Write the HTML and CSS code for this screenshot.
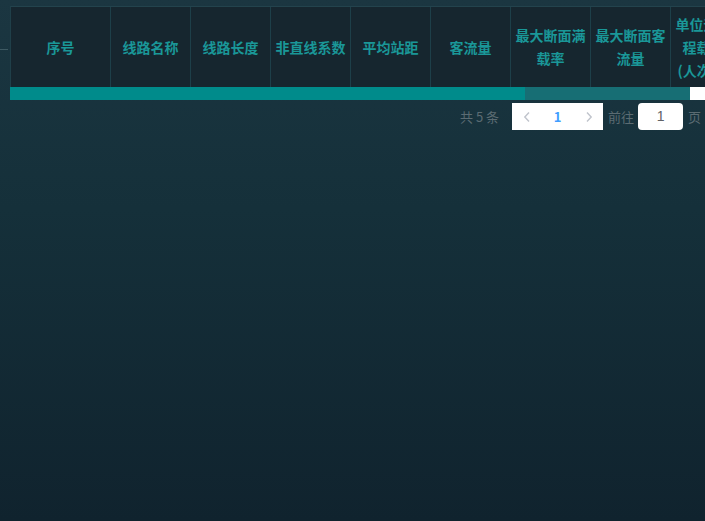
FILE: index.html
```html
<!DOCTYPE html>
<html lang="zh">
<head>
<meta charset="utf-8">
<title>线路统计</title>
<link rel="stylesheet" href="styles.css">
</head>
<body>
<div class="page">
  <span class="edge-mark"></span>
  <div class="table">
    <div class="thead">
      <div class="th w100"><span>序号</span></div>
      <div class="th"><span>线路名称</span></div>
      <div class="th"><span>线路长度</span></div>
      <div class="th"><span>非直线系数</span></div>
      <div class="th"><span>平均站距</span></div>
      <div class="th"><span>客流量</span></div>
      <div class="th"><span>最大断面满载率</span></div>
      <div class="th"><span>最大断面客流量</span></div>
      <div class="th"><span>单位运营里程载客量(人次/km)</span></div>
    </div>
    <div class="scrollbar">
      <div class="track"><div class="thumb"></div></div>
      <div class="corner"></div>
    </div>
  </div>
  <div class="pagination">
    <span class="total">共 5 条</span>
    <div class="pager">
      <span class="btn prev">
        <svg width="8" height="12" viewBox="0 0 8 12"><path d="M6 1.5 1.8 6 6 10.5" fill="none" stroke="#c0c4cc" stroke-width="1.4"/></svg>
      </span>
      <span class="num">1</span>
      <span class="btn next">
        <svg width="8" height="12" viewBox="0 0 8 12"><path d="M2 1.5 6.2 6 2 10.5" fill="none" stroke="#c0c4cc" stroke-width="1.4"/></svg>
      </span>
    </div>
    <span class="goto">前往</span>
    <span class="jump">1</span>
    <span class="goto">页</span>
  </div>
</div>
</body>
</html>
```

FILE: styles.css
```css
html, body {
  margin: 0;
  height: 100%;
}
body {
  background: linear-gradient(180deg, #1b3641 0%, #15303a 40%, #10232e 100%);
  font-family: "Noto Sans CJK SC", "Noto Sans", sans-serif;
  overflow: hidden;
}
.page {
  position: relative;
  padding: 6px 0 0 10px;
  width: 695px;
  height: 515px;
  overflow: hidden;
}
.edge-mark {
  position: absolute;
  left: 0;
  top: 49px;
  width: 8px;
  height: 1px;
  background: #3e5a63;
}
.table {
  width: 720px;
  border-top: 1px solid #23434d;
  border-left: 1px solid #1f3f49;
}
.thead {
  display: grid;
  grid-template-columns: 100px repeat(8, 80px);
  height: 80px;
  background: #16262f;
}
.th {
  display: flex;
  align-items: center;
  justify-content: center;
  border-right: 1px solid #1d3f49;
  padding: 0 4px;
  text-align: center;
  color: #1a9798;
  font-size: 14px;
  font-weight: bold;
  line-height: 23px;
}
.th span {
  display: block;
  width: 71px;
}
.th.w100 span {
  width: auto;
}
.scrollbar {
  display: flex;
  height: 13px;
  margin-left: -1px;
}
.track {
  width: 680px;
  background: #176e74;
}
.thumb {
  width: 515px;
  height: 100%;
  background: #008b8b;
}
.corner {
  width: 15px;
  background: #ffffff;
}
.pagination {
  display: flex;
  align-items: center;
  margin-top: 3px;
  margin-left: 450px;
  height: 27px;
  font-size: 13px;
  white-space: nowrap;
}
.total {
  color: #5b6b72;
  margin-right: 13px;
}
.pager {
  display: flex;
  align-items: center;
  background: #ffffff;
  width: 91px;
  height: 27px;
}
.btn {
  width: 29px;
  display: flex;
  justify-content: center;
  align-items: center;
}
.num {
  width: 33px;
  text-align: center;
  color: #409eff;
  font-weight: bold;
}
.goto {
  color: #5b6b72;
  margin: 0 4px 0 5px;
}
.jump {
  width: 46px;
  height: 27px;
  background: #ffffff;
  border-radius: 4px;
  color: #606266;
  text-align: center;
  line-height: 27px;
  font-family: "Liberation Sans", sans-serif;
  font-size: 14px;
}
```
